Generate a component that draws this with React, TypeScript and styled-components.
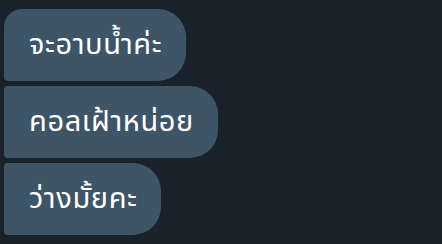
import styled, { createGlobalStyle } from 'styled-components';

const GlobalStyle = createGlobalStyle`
  html, body {
    margin: 0;
    padding: 0;
    background-color: #19212b;
  }
`;

const Chat = styled.main`
  display: flex;
  flex-direction: column;
  align-items: flex-start;
  gap: 5px;
  padding: 9px 0 0 4px;
  height: 244px;
  box-sizing: border-box;
  background-color: #19212b;
`;

const Bubble = styled.div<{ $first?: boolean }>`
  display: flex;
  align-items: center;
  height: 72px;
  padding: 0 24px 0 25px;
  box-sizing: border-box;
  background-color: #3e5568;
  color: #fff;
  font-family: 'Noto Sans Thai', 'Noto Sans', 'DejaVu Sans', sans-serif;
  font-size: 29px;
  letter-spacing: 0.6px;
  border-radius: ${({ $first }) => ($first ? '18px' : '4px')} 28px 28px 4px;
  white-space: nowrap;
`;

const messages = ['จะอาบน้ำค่ะ', 'คอลเฝ้าหน่อย', 'ว่างมั้ยคะ'];

const App = () => {
  return (
    <>
      <GlobalStyle />
      <Chat>
        {messages.map((text, i) => (
          <Bubble key={text} $first={i === 0}>
            {text}
          </Bubble>
        ))}
      </Chat>
    </>
  );
};

export default App;
